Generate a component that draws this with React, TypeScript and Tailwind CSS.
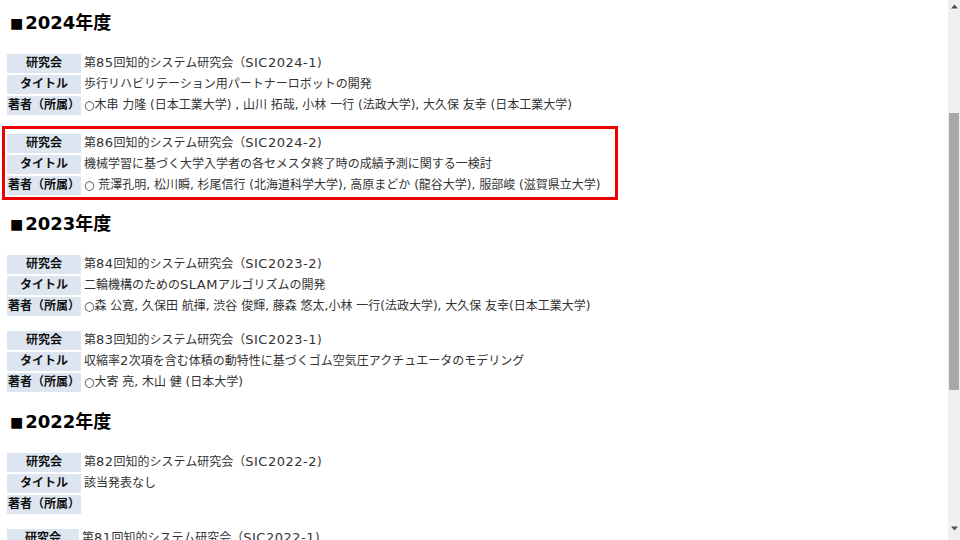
import React from "react";

interface Entry {
  kai: string;
  title: string;
  authors: string;
  highlight?: boolean;
  headW?: string;
}

interface YearBlock {
  year: string;
  entries: Entry[];
}

const data: YearBlock[] = [
  {
    year: "2024年度",
    entries: [
      {
        kai: "第85回知的システム研究会（SIC2024-1)",
        title: "歩行リハビリテーション用パートナーロボットの開発",
        authors: "○木串 力隆 (日本工業大学) , 山川 拓哉, 小林 一行 (法政大学), 大久保 友幸 (日本工業大学)",
      },
      {
        kai: "第86回知的システム研究会（SIC2024-2)",
        title: "機械学習に基づく大学入学者の各セメスタ終了時の成績予測に関する一検討",
        authors: "○ 荒澤孔明, 松川瞬, 杉尾信行 (北海道科学大学), 高原まどか (龍谷大学), 服部峻 (滋賀県立大学)",
        highlight: true,
      },
    ],
  },
  {
    year: "2023年度",
    entries: [
      {
        kai: "第84回知的システム研究会（SIC2023-2)",
        title: "二輪機構のためのSLAMアルゴリズムの開発",
        authors: "○森 公寛, 久保田 航揮, 渋谷 俊輝, 藤森 悠太,小林 一行(法政大学), 大久保 友幸(日本工業大学)",
      },
      {
        kai: "第83回知的システム研究会（SIC2023-1)",
        title: "収縮率2次項を含む体積の動特性に基づくゴム空気圧アクチュエータのモデリング",
        authors: "○大寄 亮,  木山 健 (日本大学)",
      },
    ],
  },
  {
    year: "2022年度",
    entries: [
      {
        kai: "第82回知的システム研究会（SIC2022-2)",
        title: "該当発表なし",
        authors: "",
      },
      {
        kai: "第81回知的システム研究会（SIC2022-1)",
        title: "ソフトアクチュエータを用いた把持機構の開発",
        authors: "○山田 太郎 (日本大学)",
        headW: "w-[67px]",
      },
    ],
  },
];

// latin letters/digits sit a bit wider in the original font
function Txt({ s }: { s: string }) {
  const parts = s.split(/([A-Za-z0-9][A-Za-z0-9-]*)/);
  return (
    <>
      {parts.map((p, i) =>
        i % 2 === 1 ? (
          <span key={i} className="text-[13px] leading-none tracking-[0.5px]">
            {p}
          </span>
        ) : (
          p
        )
      )}
    </>
  );
}

function EntryTable({ entry }: { entry: Entry }) {
  const head = `${entry.headW ?? "w-[74px]"} h-[19px] p-0 bg-[#dde5f0] text-center font-bold text-[#111] whitespace-nowrap`;
  const val = "h-[19px] p-0 pl-[1px] pr-[8px] text-left text-[#333] whitespace-nowrap";
  return (
    <div
      className={`border-[3px] ${
        entry.highlight
          ? "mt-[6px] pt-[3px] border-[#ee0000] w-[616px]"
          : "mt-[4px] pt-[1px] border-transparent w-fit"
      }`}
    >
      <table className="border-separate border-spacing-[2px] text-[12px] leading-[19px]">
        <tbody>
          <tr>
            <th className={head}>研究会</th>
            <td className={val}>
              <Txt s={entry.kai} />
            </td>
          </tr>
          <tr>
            <th className={head}>タイトル</th>
            <td className={val}>
              <Txt s={entry.title} />
            </td>
          </tr>
          <tr>
            <th className={head}>著者（所属）</th>
            <td className={val}>
              <Txt s={entry.authors} />
            </td>
          </tr>
        </tbody>
      </table>
    </div>
  );
}

function ScrollBar() {
  return (
    <div className="w-[12px] h-full bg-[#f0f0f0] flex flex-col items-center">
      <div className="h-[12px] flex items-center justify-center">
        <svg width="7" height="5" viewBox="0 0 7 5" aria-hidden="true">
          <path d="M3.5 0.5L7 4.5H0z" fill="#505050" />
        </svg>
      </div>
      <div className="h-[101px]" />
      <div className="w-[10px] h-[277px] bg-[#a8a8a8]" />
      <div className="flex-1" />
      <div className="h-[14px] flex items-start justify-center">
        <svg width="7" height="5" viewBox="0 0 7 5" aria-hidden="true">
          <path d="M0 0.5H7L3.5 4.5z" fill="#505050" />
        </svg>
      </div>
    </div>
  );
}

export default function App() {
  return (
    <div
      className="flex w-[960px] h-[540px] overflow-hidden bg-white"
      style={{ fontFamily: '"DejaVu Sans", "Noto Sans CJK JP", sans-serif' }}
    >
      <div className="flex-1 pl-[2px] pt-[11px]">
        {data.map((block, i) => (
          <section key={block.year} className={i === 0 ? "" : i === 1 ? "mt-[12px]" : "mt-[13px]"}>
            <h2 className="pl-[8px] text-[18px] leading-[24px] font-bold text-black mb-[13px] flex items-center">
              <span className="text-[14px] mr-[2px]">■</span>
              {block.year}
            </h2>
            {block.entries.map((e) => (
              <EntryTable key={e.kai} entry={e} />
            ))}
          </section>
        ))}
      </div>
      <ScrollBar />
    </div>
  );
}
